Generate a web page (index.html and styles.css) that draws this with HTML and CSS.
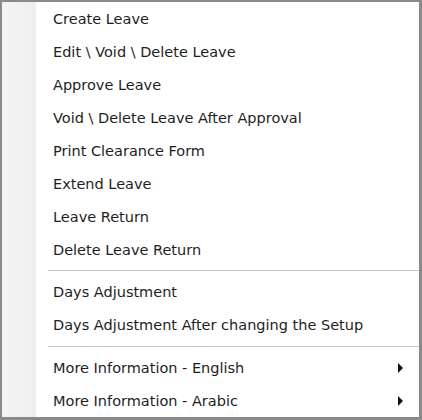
FILE: index.html
```html
<!DOCTYPE html>
<html>
<head>
<meta charset="utf-8">
<link rel="stylesheet" href="styles.css">
</head>
<body>
<div class="menu">
  <div class="gutter"></div>
  <ul class="items">
    <li class="item">Create Leave</li>
    <li class="item">Edit \ Void \ Delete Leave</li>
    <li class="item">Approve Leave</li>
    <li class="item">Void \ Delete Leave After Approval</li>
    <li class="item">Print Clearance Form</li>
    <li class="item">Extend Leave</li>
    <li class="item">Leave Return</li>
    <li class="item">Delete Leave Return</li>
    <li class="sep"></li>
    <li class="item">Days Adjustment</li>
    <li class="item">Days Adjustment After changing the Setup</li>
    <li class="sep"></li>
    <li class="item sub">More Information - English<span class="arrow"></span></li>
    <li class="item sub">More Information - Arabic<span class="arrow"></span></li>
  </ul>
</div>
</body>
</html>
```
FILE: styles.css
```css
html, body {
  margin: 0;
  padding: 0;
  background: #ffffff;
}
.menu {
  width: 422px;
  height: 420px;
  box-sizing: border-box;
  border-top: 2px solid #8a8a8a;
  border-left: 2px solid #8a8a8a;
  border-right: 3px solid #8a8a8a;
  border-bottom: 3px solid #8a8a8a;
  display: flex;
  background: #ffffff;
  font-family: "DejaVu Sans", sans-serif;
  font-size: 14.5px;
  color: #1e1e1e;
}
.gutter {
  width: 34px;
  flex: none;
  background: linear-gradient(to right, #f4f4f4, #f0f0f0 80%, #ececec);
}
.items {
  list-style: none;
  margin: 0;
  padding: 0;
  flex: 1;
}
.item {
  height: 33px;
  display: flex;
  align-items: center;
  padding-left: 17px;
  padding-right: 16px;
  white-space: nowrap;
}
.sub {
  justify-content: space-between;
}
.arrow {
  width: 0;
  height: 0;
  border-top: 5px solid transparent;
  border-bottom: 5px solid transparent;
  border-left: 5px solid #111111;
}
.sep {
  height: 9.5px;
  display: flex;
  align-items: center;
  margin-left: 12px;
}
.sep::before {
  content: "";
  display: block;
  width: 100%;
  height: 1px;
  background: #c4c4c4;
  box-shadow: 0 1px 0 #ffffff;
}
```
